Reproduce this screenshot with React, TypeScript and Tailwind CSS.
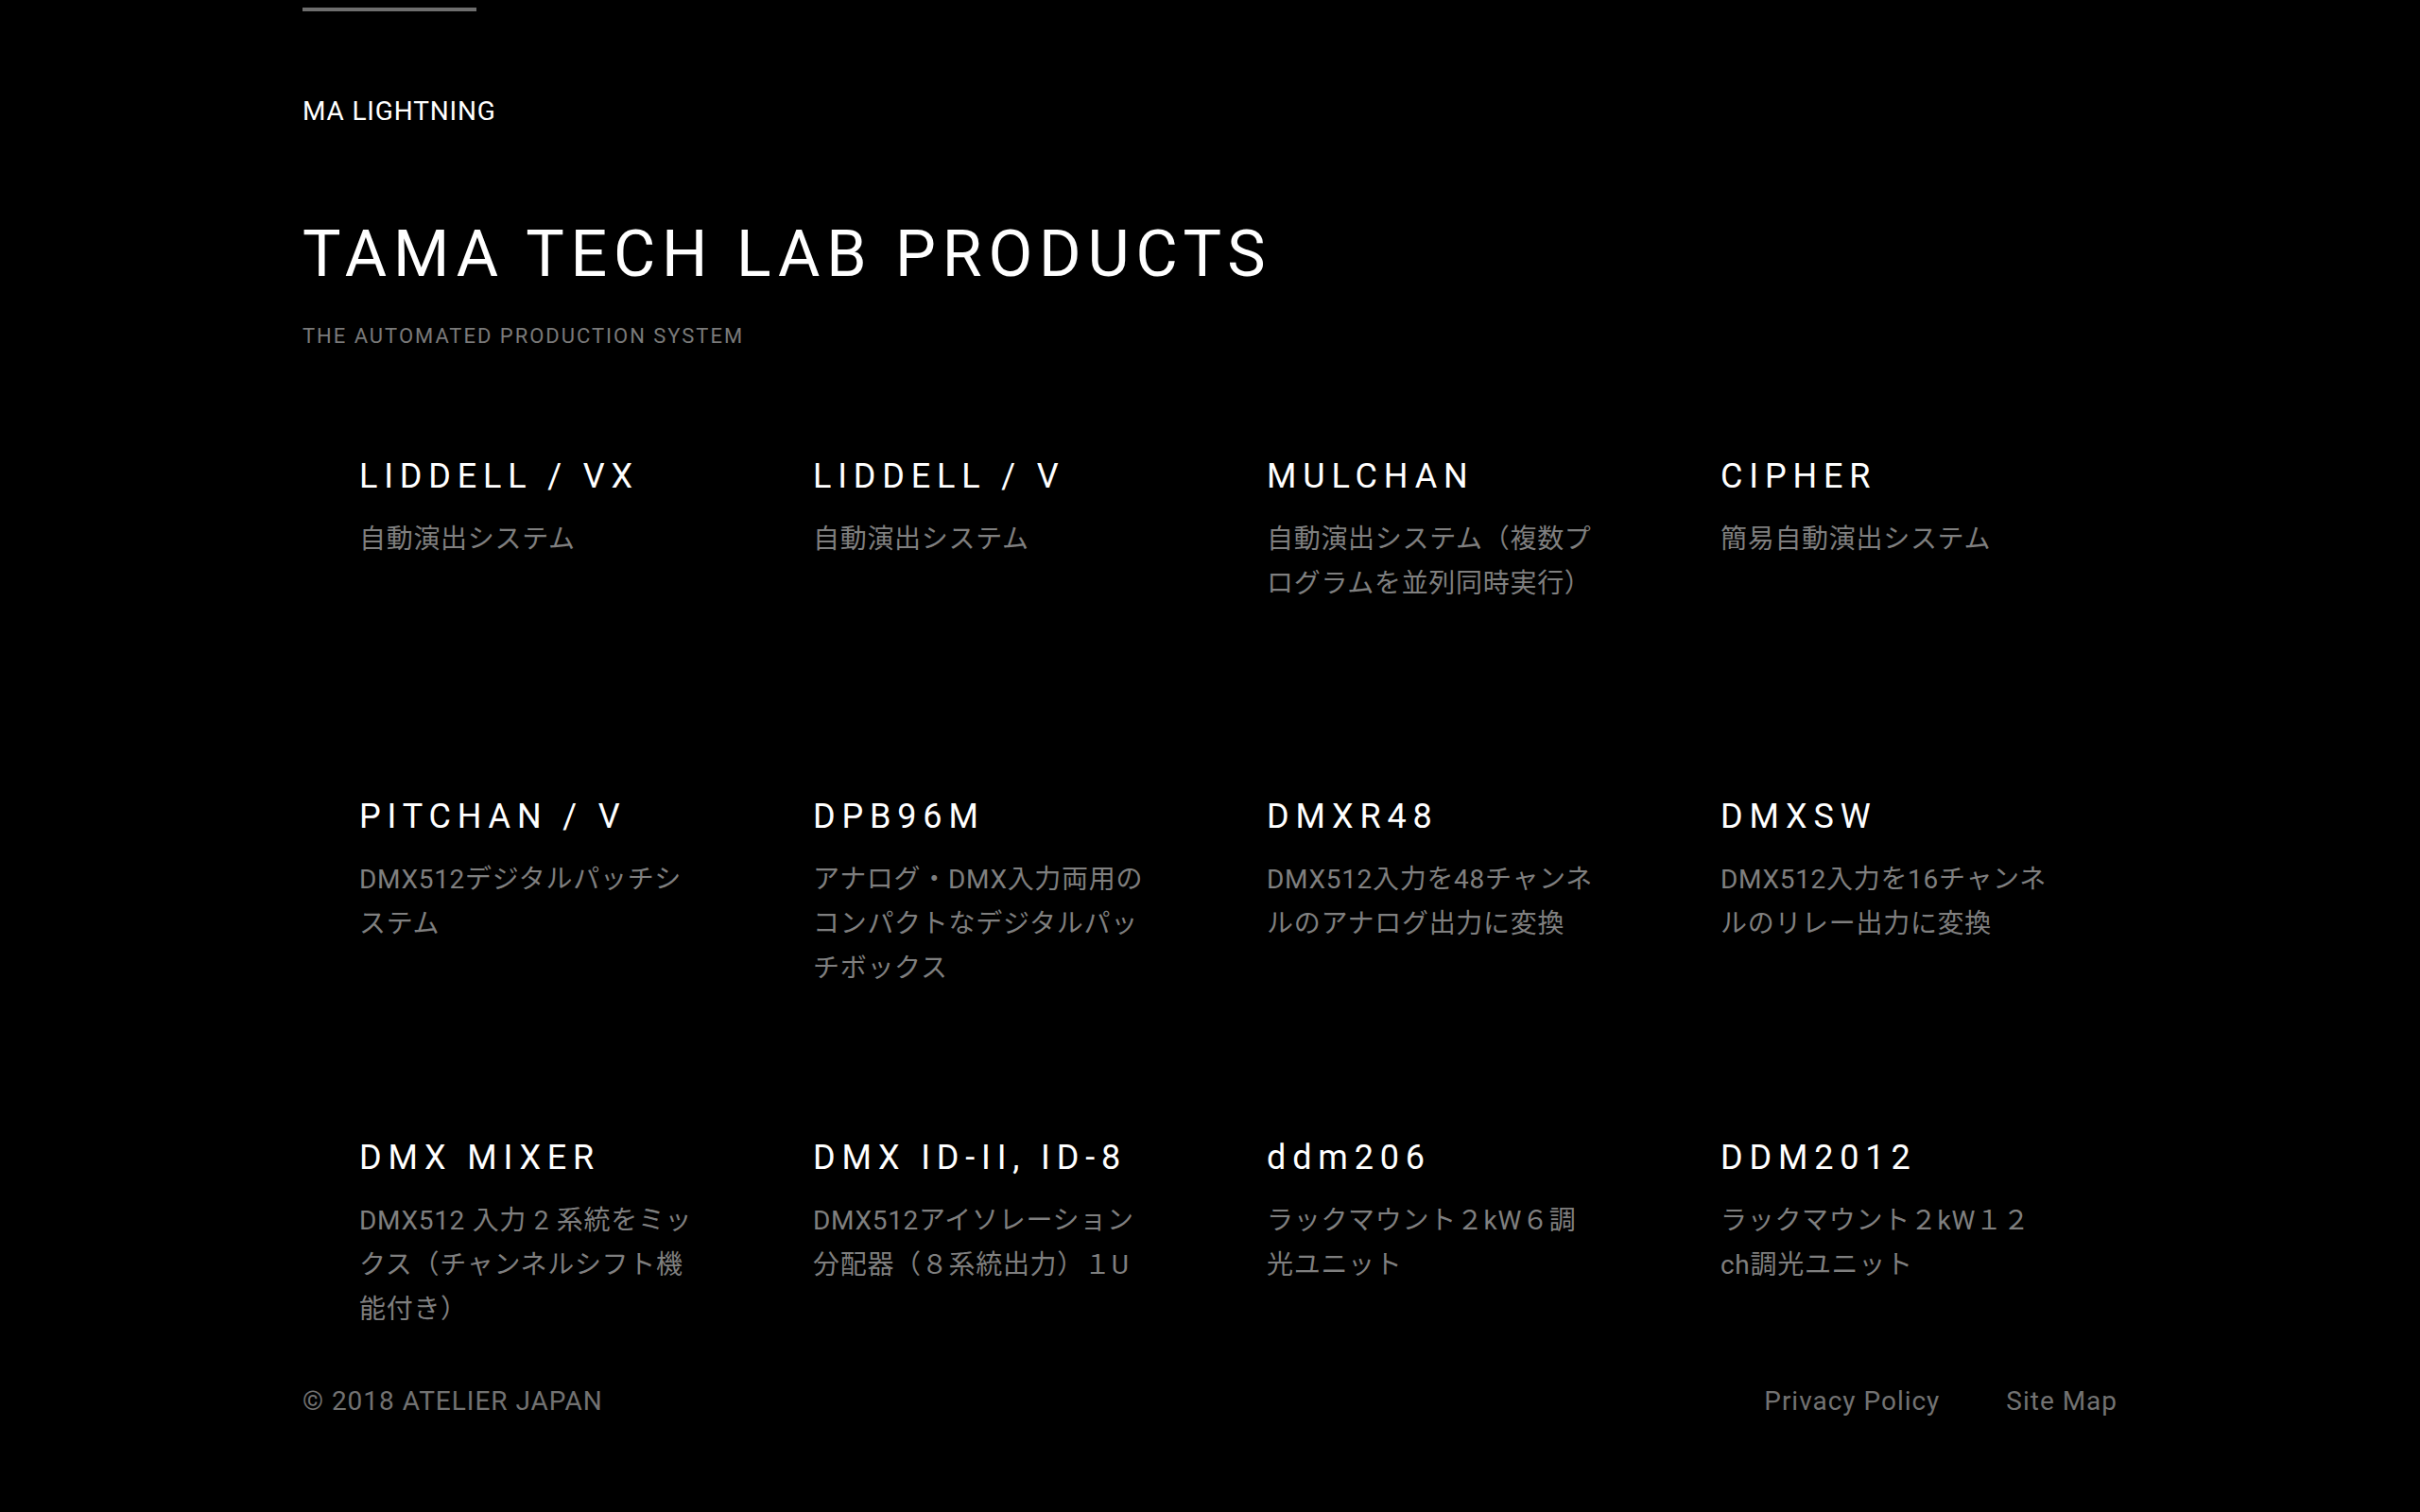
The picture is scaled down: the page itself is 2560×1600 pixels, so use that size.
import type React from "react";

type Product = {
  name: string;
  lines: string[];
};

const products: Product[] = [
  { name: "LIDDELL / VX", lines: ["自動演出システム"] },
  { name: "LIDDELL / V", lines: ["自動演出システム"] },
  { name: "MULCHAN", lines: ["自動演出システム（複数プ", "ログラムを並列同時実行）"] },
  { name: "CIPHER", lines: ["簡易自動演出システム"] },
  { name: "PITCHAN / V", lines: ["DMX512デジタルパッチシ", "ステム"] },
  { name: "DPB96M", lines: ["アナログ・DMX入力両用の", "コンパクトなデジタルパッ", "チボックス"] },
  { name: "DMXR48", lines: ["DMX512入力を48チャンネ", "ルのアナログ出力に変換"] },
  { name: "DMXSW", lines: ["DMX512入力を16チャンネ", "ルのリレー出力に変換"] },
  { name: "DMX MIXER", lines: ["DMX512 入力 2 系統をミッ", "クス（チャンネルシフト機", "能付き）"] },
  { name: "DMX ID-II, ID-8", lines: ["DMX512アイソレーション", "分配器（８系統出力）１U"] },
  { name: "ddm206", lines: ["ラックマウント２kW６調", "光ユニット"] },
  { name: "DDM2012", lines: ["ラックマウント２kW１２", "ch調光ユニット"] },
];

const ProductCard: React.FC<{ item: Product }> = ({ item }) => (
  <div className="pl-[60px] min-h-[201px]">
    <h3 className="text-[36px] leading-[36px] tracking-[0.19em] text-white font-normal whitespace-nowrap">
      {item.name}
    </h3>
    <div className="mt-[25px] text-[28px] leading-[47px] tracking-[0.025em] text-[#7f7f7f]">
      {item.lines.map((line, i) => (
        <p key={i} className="whitespace-nowrap">
          {line}
        </p>
      ))}
    </div>
  </div>
);

const App: React.FC = () => {
  return (
    <div className="min-h-screen bg-black font-['Roboto','Noto_Sans_CJK_JP',sans-serif] antialiased">
      <div className="w-[1920px] mx-auto pt-2 pb-[100px]">
        {/* section rule */}
        <div className="w-[184px] h-1 bg-[#6e6e6e]" />

        <p className="mt-[92px] text-[28px] leading-[28px] tracking-[0.03em] text-white">
          MA LIGHTNING
        </p>

        <h1 className="mt-[103px] text-[68px] leading-[68px] tracking-[0.1em] text-white font-normal whitespace-nowrap">
          TAMA TECH LAB PRODUCTS
        </h1>
        <p className="mt-[42px] text-[22px] leading-[22px] tracking-[0.09em] text-[#7a7a7a]">
          THE AUTOMATED PRODUCTION SYSTEM
        </p>

        {/* products */}
        <div className="mt-[119px] grid grid-cols-4 gap-y-[159px]">
          {products.map((p) => (
            <ProductCard key={p.name} item={p} />
          ))}
        </div>

        {/* footer */}
        <footer className="mt-[60px] flex items-center justify-between text-[28px] leading-[28px] tracking-[0.035em] text-[#727272]">
          <p>© 2018 ATELIER JAPAN</p>
          <div className="flex gap-[70px]">
            <a href="#">Privacy Policy</a>
            <a href="#">Site Map</a>
          </div>
        </footer>
      </div>
    </div>
  );
};

export default App;
